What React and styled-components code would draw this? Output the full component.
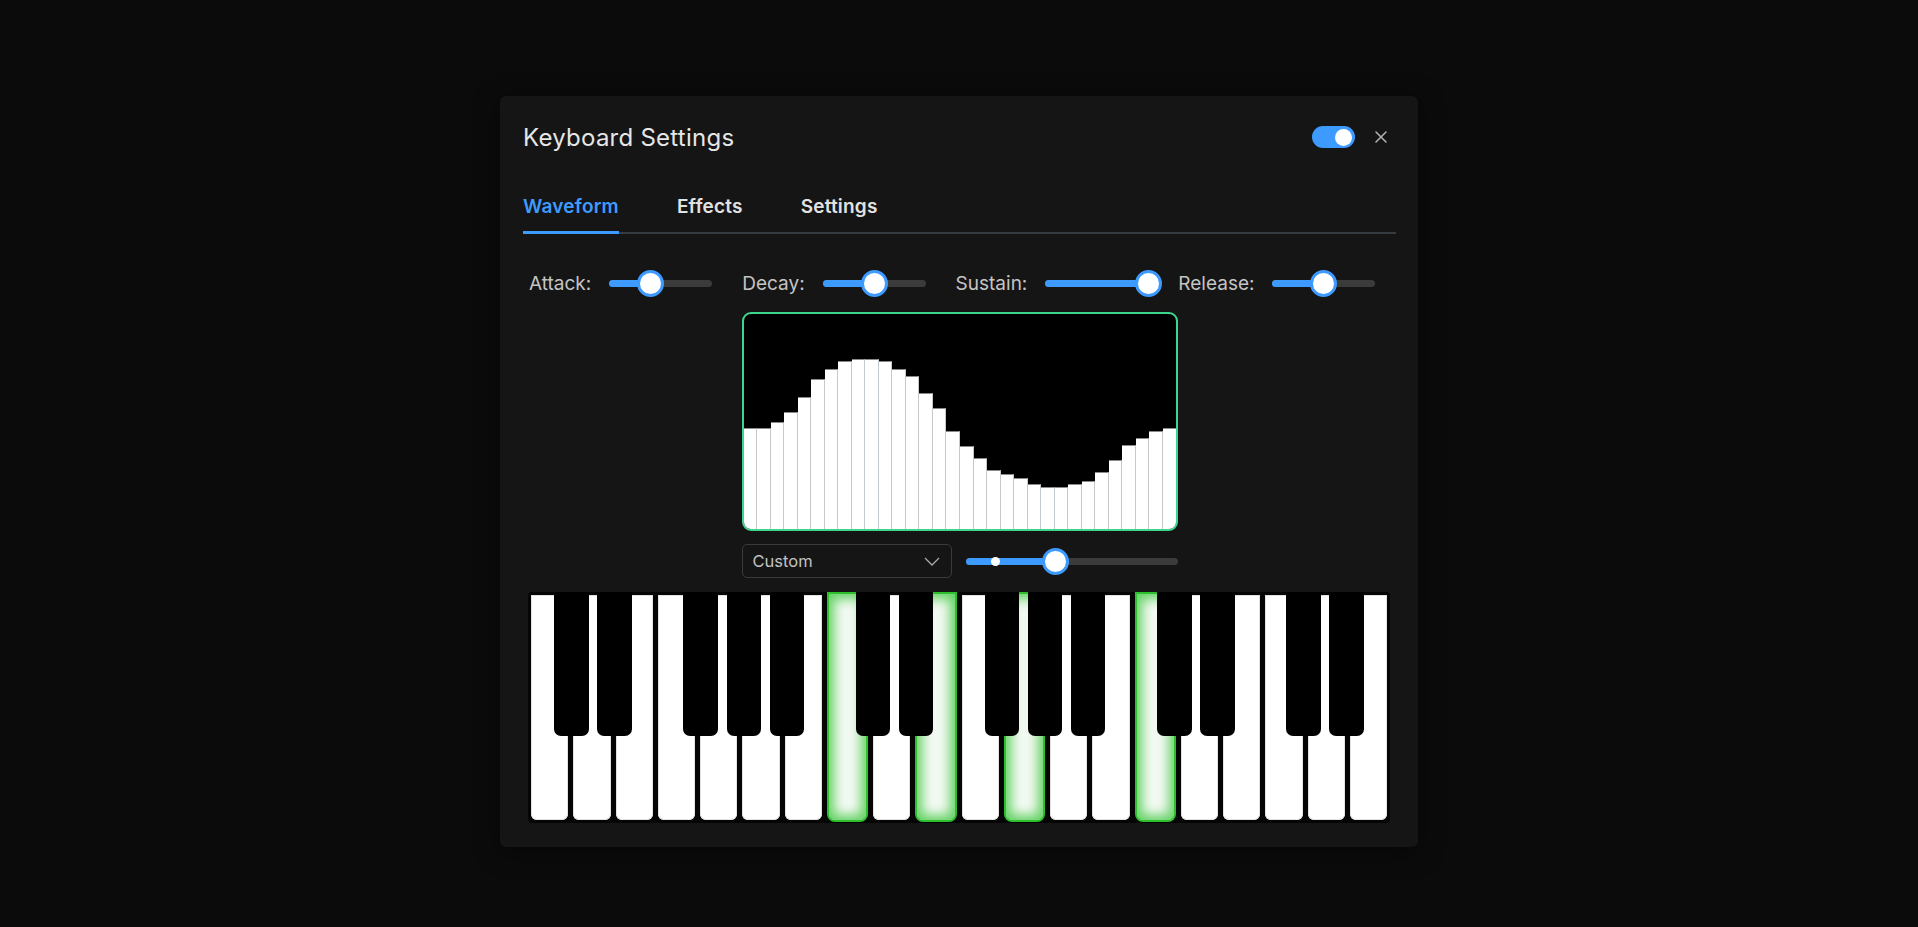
import React from 'react';
import styled, { createGlobalStyle } from 'styled-components';

const GlobalStyle = createGlobalStyle`
    html, body {
        margin: 0;
        padding: 0;
        background: #0b0b0b;
        font-family: Inter, "Noto Sans", "Liberation Sans", sans-serif;
    }
`;

const Page = styled.div`
    min-height: 100vh;
    padding-top: 96px;
    box-sizing: border-box;
`;

const Panel = styled.div`
    width: 918px;
    margin: 0 auto;
    box-sizing: border-box;
    padding: 24px 22px 24px 23px;
    background: #151515;
    border-radius: 6px;
    box-shadow: 0 4px 24px rgba(0, 0, 0, 0.5);
    display: flex;
    flex-direction: column;
`;

const Header = styled.div`
    height: 34px;
    display: flex;
    align-items: center;
    justify-content: space-between;
    padding-right: 3px;
`;

const Title = styled.h1`
    margin: 0;
    font-size: 24px;
    font-weight: 400;
    color: #e6e6e6;
    letter-spacing: 0.25px;
`;

const HeaderActions = styled.div`
    display: flex;
    align-items: center;
    gap: 14px;
`;

const Toggle = styled.div`
    width: 43px;
    height: 22px;
    border-radius: 11px;
    background: #3d9bff;
    display: flex;
    align-items: center;
    justify-content: ${(p) => (p.$on ? 'flex-end' : 'flex-start')};
    padding: 0 3px;
    box-sizing: border-box;

    span {
        width: 17px;
        height: 17px;
        border-radius: 50%;
        background: #ffffff;
    }
`;

const CloseButton = styled.button`
    width: 24px;
    height: 24px;
    border: none;
    background: none;
    padding: 0;
    display: flex;
    align-items: center;
    justify-content: center;
    color: #b4b4b4;
    cursor: pointer;
`;

const TabList = styled.div`
    margin-top: 41px;
    display: flex;
    gap: 58px;
    border-bottom: 2px solid #363b3f;
`;

const Tab = styled.div`
    font-size: 19px;
    line-height: 24px;
    font-weight: 600;
    letter-spacing: 0.2px;
    color: ${(p) => (p.$active ? '#3d9bff' : '#e2e2e2')};
    padding-bottom: 12px;
    border-bottom: 3px solid ${(p) => (p.$active ? '#3d9bff' : 'transparent')};
    margin-bottom: -2px;
`;

const EnvelopeRow = styled.div`
    margin-top: 35px;
    height: 28px;
    display: flex;
    align-items: center;
    gap: 30px;
    padding-left: 6px;
`;

const ControlGroup = styled.div`
    display: flex;
    align-items: center;
    gap: 18px;
`;

const Label = styled.span`
    font-size: 19px;
    color: #c4c4c4;
`;

const Track = styled.div`
    position: relative;
    width: ${(p) => p.$width}px;
    height: 7px;
    border-radius: 4px;
    background: #3b3b3b;
`;

const Fill = styled.div`
    height: 100%;
    border-radius: 4px;
    background: #3d9bff;
`;

const Thumb = styled.div`
    position: absolute;
    top: 50%;
    width: 27px;
    height: 27px;
    margin-left: -13.5px;
    margin-top: -13.5px;
    border-radius: 50%;
    border: 3px solid #3d9bff;
    background: #ffffff;
    box-sizing: border-box;
`;

const Marker = styled.div`
    position: absolute;
    top: 50%;
    width: 9px;
    height: 9px;
    margin: -4.5px 0 0 -4.5px;
    border-radius: 50%;
    background: #ffffff;
`;

const WaveSection = styled.div`
    margin-top: 15px;
    display: flex;
    flex-direction: column;
    align-items: center;
`;

const WaveBox = styled.div`
    width: 436px;
    height: 219px;
    box-sizing: border-box;
    border: 2px solid #3ed68c;
    border-radius: 9px;
    background: #000000;
    overflow: hidden;
    display: flex;
    align-items: flex-end;
`;

const Bar = styled.div`
    flex: 1;
    background: #ffffff;
    border-right: 1px solid #c4c9ce;
    border-top: 1px solid #8a8a8a;
    box-sizing: border-box;

    &:last-child {
        border-right: none;
    }
`;

const WaveControls = styled.div`
    margin-top: 13px;
    width: 436px;
    height: 34px;
    display: flex;
    align-items: center;
    gap: 14px;
`;

const Select = styled.div`
    width: 210px;
    height: 34px;
    box-sizing: border-box;
    border: 1px solid #3a3a3a;
    border-radius: 5px;
    display: flex;
    align-items: center;
    justify-content: space-between;
    padding: 0 11px 0 10px;
    font-size: 16.5px;
    color: #c2c2c2;
`;

const Keyboard = styled.div`
    position: relative;
    margin: 14px 6px 0 5px;
    height: 231px;
    box-sizing: border-box;
    padding: 3px;
    background: #050505;
    border-radius: 4px;
    display: flex;
    gap: 5px;
`;

const WhiteKey = styled.div`
    flex: 1;
    background: ${(p) => (p.$pressed ? '#f4faf4' : '#ffffff')};
    border-radius: ${(p) => (p.$pressed ? '0 0 8px 8px' : '0 0 6px 6px')};
    box-sizing: border-box;
    border: ${(p) => (p.$pressed ? '2px solid #2cc02c' : 'none')};
    box-shadow: ${(p) =>
        p.$pressed
            ? 'inset 0 0 12px 5px rgba(50, 195, 50, 0.75)'
            : 'inset 0 0 0 1px #e2e2e2'};
    margin: ${(p) => (p.$pressed ? '-3px 0 -2px' : '0')};
`;

const BlackKey = styled.div`
    position: absolute;
    top: 0;
    left: ${(p) => 3 + (p.$after + 1) * 43.05 - 2.5 - 17.25}px;
    width: 34.5px;
    height: 144px;
    background: #000000;
    border-radius: 0 0 7px 7px;
`;

const envelope = [
    { label: 'Attack:', value: 0.4 },
    { label: 'Decay:', value: 0.5 },
    { label: 'Sustain:', value: 1 },
    { label: 'Release:', value: 0.5 },
];

const waveform = [
    0.469, 0.469, 0.5, 0.546, 0.615, 0.7, 0.746, 0.78, 0.792, 0.792, 0.78,
    0.746, 0.711, 0.631, 0.562, 0.454, 0.388, 0.328, 0.274, 0.257, 0.235,
    0.211, 0.195, 0.195, 0.211, 0.223, 0.265, 0.32, 0.389, 0.423, 0.454, 0.469,
];

const pressed = [7, 9, 11, 14];
const blackAfter = [0, 1, 3, 4, 5, 7, 8, 10, 11, 12, 14, 15, 17, 18];

function Slider({ width, value, marker }) {
    return (
        <Track $width={width}>
            <Fill style={{ width: `${value * 100}%` }} />
            {marker !== undefined && <Marker style={{ left: `${marker * 100}%` }} />}
            <Thumb style={{ left: `${value * 100}%` }} />
        </Track>
    );
}

function App() {
    return (
        <Page>
            <GlobalStyle />
            <Panel>
                <Header>
                    <Title>Keyboard Settings</Title>
                    <HeaderActions>
                        <Toggle $on>
                            <span />
                        </Toggle>
                        <CloseButton>
                            <svg width="12" height="12" viewBox="0 0 12 12">
                                <path d="M1 1L11 11M11 1L1 11" stroke="currentColor" strokeWidth="1.5" strokeLinecap="round" />
                            </svg>
                        </CloseButton>
                    </HeaderActions>
                </Header>

                <TabList>
                    <Tab $active>Waveform</Tab>
                    <Tab>Effects</Tab>
                    <Tab>Settings</Tab>
                </TabList>

                <EnvelopeRow>
                    {envelope.map((e) => (
                        <ControlGroup key={e.label}>
                            <Label>{e.label}</Label>
                            <Slider width={103} value={e.value} />
                        </ControlGroup>
                    ))}
                </EnvelopeRow>

                <WaveSection>
                    <WaveBox>
                        {waveform.map((v, i) => (
                            <Bar key={i} style={{ height: `${v * 100}%` }} />
                        ))}
                    </WaveBox>
                    <WaveControls>
                        <Select>
                            <span>Custom</span>
                            <svg width="16" height="9" viewBox="0 0 16 9" fill="none">
                                <path d="M1 1L8 8L15 1" stroke="#a8a8a8" strokeWidth="1.3" />
                            </svg>
                        </Select>
                        <Slider width={212} value={0.425} marker={0.14} />
                    </WaveControls>
                </WaveSection>

                <Keyboard>
                    {Array.from({ length: 20 }, (_, i) => (
                        <WhiteKey key={i} $pressed={pressed.includes(i)} />
                    ))}
                    {blackAfter.map((i) => (
                        <BlackKey key={i} $after={i} />
                    ))}
                </Keyboard>
            </Panel>
        </Page>
    );
}

export default App;
